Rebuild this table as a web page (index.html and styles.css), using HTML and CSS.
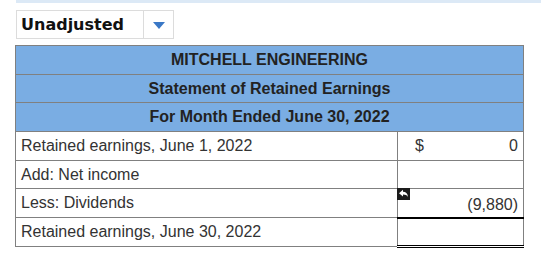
FILE: index.html
```html
<!DOCTYPE html>
<html>
<head>
<meta charset="utf-8">
<link rel="stylesheet" href="styles.css">
</head>
<body>
<div class="topbar"></div>
<div class="select">
  <span class="select-label">Unadjusted</span>
  <span class="select-btn"><svg width="12" height="7" viewBox="0 0 12 7"><path d="M0 0H12L6 7Z" fill="#3a78c6"/></svg></span>
</div>
<table class="stmt">
  <colgroup><col class="c1"><col class="c2"></colgroup>
  <tr class="hd"><td colspan="2">MITCHELL ENGINEERING</td></tr>
  <tr class="hd"><td colspan="2">Statement of Retained Earnings</td></tr>
  <tr class="hd"><td colspan="2">For Month Ended June 30, 2022</td></tr>
  <tr><td class="lbl">Retained earnings, June 1, 2022</td><td class="val"><span class="cur">$</span><span class="num">0</span></td></tr>
  <tr><td class="lbl">Add: Net income</td><td class="val"></td></tr>
  <tr><td class="lbl">Less: Dividends</td><td class="val under"><span class="flag"><svg width="13" height="12" viewBox="0 0 13 12"><rect width="13" height="12" fill="#1b1b1b"/><path d="M2 5.2L6 1.8V3.8C8.8 3.8 10.6 5.4 11 9C9.9 7.3 8.4 6.6 6 6.6V8.6Z" fill="#fff"/></svg></span><span class="num low">(9,880)</span></td></tr>
  <tr><td class="lbl">Retained earnings, June 30, 2022</td><td class="val dbl"></td></tr>
</table>
</body>
</html>
```
FILE: styles.css
```css
html, body {
  margin: 0;
  padding: 0;
  background: #fff;
}
body {
  padding-left: 16px;
  font-family: "Liberation Sans", Arial, sans-serif;
  color: #333;
}
.topbar {
  height: 3px;
  background: #dce9f6;
}
.select {
  margin-top: 7px;
  width: 158px;
  height: 29px;
  box-sizing: border-box;
  border: 1px solid #dcdcdc;
  display: flex;
  align-items: stretch;
}
.select-label {
  flex: 1;
  font-family: "DejaVu Sans", Verdana, sans-serif;
  font-weight: bold;
  font-size: 16px;
  color: #111;
  padding-left: 4px;
  line-height: 28px;
}
.select-btn {
  width: 30px;
  border-left: 1px solid #dcdcdc;
  display: flex;
  align-items: center;
  justify-content: center;
  padding-top: 2px;
  box-sizing: border-box;
}
.stmt {
  margin-top: 6px;
  margin-left: -1px;
  border-collapse: collapse;
  width: 508px;
  font-size: 16px;
  table-layout: fixed;
}
.c1 { width: 382px; }
.c2 { width: 126px; }
.stmt td {
  border: 1px solid #808080;
  height: 28.7px;
  padding: 0;
  box-sizing: border-box;
}
.hd td {
  background: #7aade3;
  text-align: center;
  font-weight: bold;
  color: #222;
}
.lbl {
  padding-left: 5px !important;
}
.val {
  position: relative;
  padding: 0 5px 0 0 !important;
}
.val .cur {
  position: absolute;
  left: 17px;
  top: 5px;
}
.val .num {
  display: block;
  text-align: right;
}
.val .num.low {
  padding-top: 4px;
}
.flag {
  position: absolute;
  left: -1px;
  top: -1px;
  line-height: 0;
}
.stmt td.under {
  border-bottom: 2px solid #000;
}
.stmt td.dbl {
  border-bottom: 3px double #000;
}
```
